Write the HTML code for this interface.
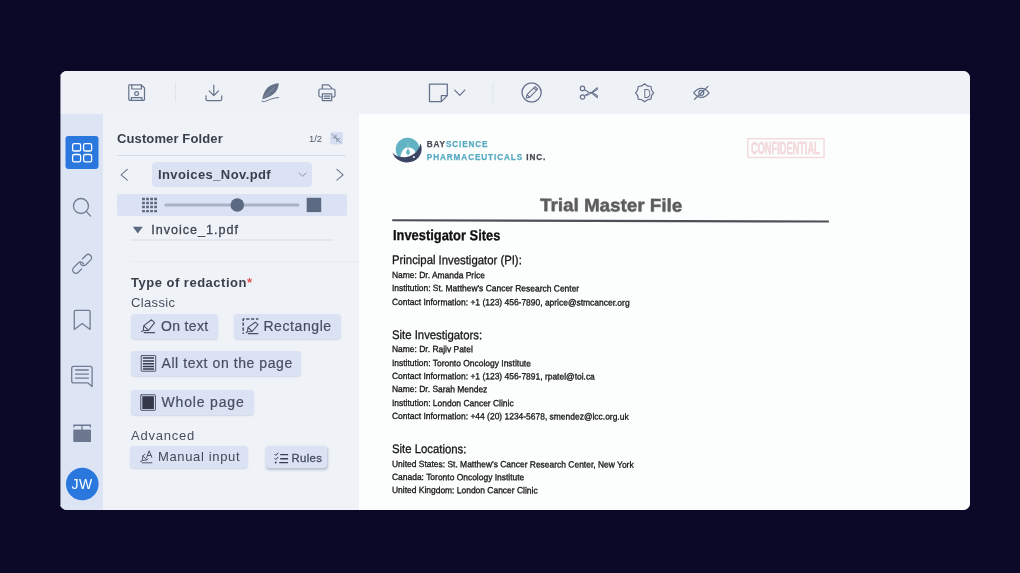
<!DOCTYPE html>
<html lang="en">
<head>
<meta charset="utf-8">
<title>Document redaction</title>
<style>
html,body{margin:0;padding:0;}
body{width:1020px;height:573px;overflow:hidden;background:#0b0927;position:relative;font-family:"Liberation Sans",sans-serif;}
.win{position:absolute;left:60px;top:71px;width:910px;height:439px;border-radius:7px;overflow:hidden;background:#eef2f7;}
.pg{position:absolute;left:-60px;top:-71px;width:1020px;height:573px;filter:blur(.55px);}
.pg div,.pg span,.pg svg{position:absolute;}
.toolbar{left:40px;top:50px;width:950px;height:64px;background:#eef2f7;}
.side{left:40px;top:114px;width:63.4px;height:420px;background:#dde5f5;}
.panel{left:103.4px;top:114px;width:255.8px;height:420px;background:#eff3f8;}
.docbg{left:359.2px;top:114px;width:631px;height:420px;background:#fcfdfd;}
.t{white-space:pre;line-height:1;}
.d{transform-origin:0 50%;-webkit-text-stroke:.3px currentColor;}
.chip{background:#dbe2f4;border-radius:4px;box-shadow:0 1px 1.5px rgba(120,135,170,.25);}
#lg1 i,#lg2 i{font-style:normal;color:#58abc2;}
.hr{height:1px;background:#d9dfea;}
</style>
</head>
<body>
<div class="win"><div class="pg">
<div class="toolbar"></div>
<div class="side"></div>
<div class="panel"></div>
<div class="docbg"></div>

<!-- sidebar -->

<!-- panel -->
<div class="hr" style="left:117px;top:155px;width:229px;background:#d5dcec;"></div>
<div id="sel" style="left:152px;top:162px;width:160px;height:25px;border-radius:4px;background:#dbe2f4;"></div>
<div id="sl" style="left:117px;top:194px;width:230px;height:22px;border-radius:2px;background:#dbe2f4;"></div>
<div class="hr" style="left:131px;top:239px;width:202px;height:2px;background:#e3e7ed;"></div>
<div class="hr" style="left:131px;top:261px;width:228.2px;background:#e8ecf1;"></div>

<div class="chip" id="c1" style="left:131px;top:314px;width:87px;height:25px;"></div>
<div class="chip" id="c2" style="left:234px;top:314px;width:107px;height:25px;"></div>
<div class="chip" id="c3" style="left:131px;top:351px;width:170px;height:25px;"></div>
<div class="chip" id="c4" style="left:131px;top:390px;width:123px;height:25px;"></div>
<div class="chip" id="c5" style="left:130px;top:446px;width:118px;height:22px;"></div>
<div class="chip" id="c6" style="left:266px;top:446px;width:61px;height:22px;box-shadow:.5px 1.5px 2.5px rgba(90,105,140,.36);"></div>

<svg width="1020" height="573" viewBox="0 0 1020 573" style="left:0;top:0">
<rect id="act" x="65.5" y="136.1" width="33" height="33" rx="3" fill="#2a78de"/>
<circle id="ava" cx="82.3" cy="484" r="16.3" fill="#2a78de"/>
<rect x="164.4" y="203.5" width="135.1" height="3" rx="1.5" fill="#a9b3c8"/>
<circle cx="237.3" cy="205" r="6.8" fill="#5b6983"/>
<rect x="306.7" y="197.8" width="14.5" height="14.3" fill="#5b6983"/>
<rect id="cchip" x="330.1" y="131.9" width="12.8" height="12.5" rx="2" fill="#d5def3"/>
</svg>
<div id="txl" style="left:0;top:0;width:1020px;height:573px;will-change:transform;">
<span class="t" id="tCF" style="left:117.0px;top:132.00px;font-size:13px;font-weight:700;letter-spacing:0.12px;color:#3a3f4c;">Customer Folder</span>
<span class="t" id="t12" style="left:309.0px;top:134.01px;font-size:9.5px;letter-spacing:-0.1px;color:#555b6b;">1/2</span>
<span class="t" id="tINV" style="left:158.0px;top:168.01px;font-size:13px;font-weight:700;letter-spacing:0.4px;color:#3a3f4c;">Invoices_Nov.pdf</span>
<span class="t" id="tIN1" style="left:151.3px;top:224.01px;font-size:12.6px;letter-spacing:0.98px;color:#3f4452;-webkit-text-stroke:0.3px #3f4452;">Invoice_1.pdf</span>
<span class="t" id="tTYPE" style="left:131.0px;top:276.00px;font-size:13px;font-weight:700;letter-spacing:0.5px;color:#3a3f4c;">Type of redaction<i style="color:#e0524f;font-style:normal">*</i></span>
<span class="t" id="tCL" style="left:131.0px;top:296.01px;font-size:13px;letter-spacing:0.37px;color:#4a4f5d;">Classic</span>
<span class="t" id="tON" style="left:161.0px;top:319.00px;font-size:14px;letter-spacing:0.33px;color:#474e62;-webkit-text-stroke:.2px #474e62;">On text</span>
<span class="t" id="tRECT" style="left:263.4px;top:319.00px;font-size:14px;letter-spacing:0.59px;color:#474e62;-webkit-text-stroke:.2px #474e62;">Rectangle</span>
<span class="t" id="tALL" style="left:161.5px;top:356.01px;font-size:14px;letter-spacing:0.57px;color:#474e62;-webkit-text-stroke:.2px #474e62;">All text on the page</span>
<span class="t" id="tWH" style="left:161.5px;top:395.00px;font-size:14px;letter-spacing:0.84px;color:#474e62;-webkit-text-stroke:.2px #474e62;">Whole page</span>
<span class="t" id="tADV" style="left:131.0px;top:429.01px;font-size:13px;letter-spacing:0.77px;color:#4a4f5d;">Advanced</span>
<span class="t" id="tMAN" style="left:158.0px;top:450.00px;font-size:13px;letter-spacing:0.65px;color:#434856;">Manual input</span>
<span class="t" id="tRU" style="left:291.6px;top:453.01px;font-size:11.4px;letter-spacing:0.3px;color:#454c60;-webkit-text-stroke:0.3px #454c60;">Rules</span>
<span class="t" id="tJW" style="left:71.4px;top:477.00px;font-size:14px;letter-spacing:0.5px;color:#ffffff;">JW</span>

<span class="t d" id="dT" style="left:540.3px;top:195.81px;font-size:18px;transform:rotate(.165deg) scaleX(1.045);font-weight:700;color:#5c5c5c;text-shadow:0.5px 0.8px 1px rgba(0,0,0,.25);">Trial Master File</span>
<span class="t d" id="dIS" style="left:392.6px;top:228.31px;font-size:14.5px;transform:rotate(.165deg) scaleX(0.888);font-weight:700;color:#111;">Investigator Sites</span>
<span class="t d" id="dH1" style="left:392.2px;top:254.21px;font-size:12.4px;transform:rotate(.165deg) scaleX(0.915);color:#161616;">Principal Investigator (PI):</span>
<span class="t d" id="dL1" style="left:392.2px;top:270.91px;font-size:9px;transform:rotate(.165deg) scaleX(0.939);color:#161616;">Name: Dr. Amanda Price</span>
<span class="t d" id="dL2" style="left:392.2px;top:284.20px;font-size:9px;transform:rotate(.165deg) scaleX(0.939);color:#161616;">Institution: St. Matthew&#39;s Cancer Research Center</span>
<span class="t d" id="dL3" style="left:392.2px;top:297.50px;font-size:9px;transform:rotate(.165deg) scaleX(0.939);color:#161616;">Contact Information: +1 (123) 456-7890, aprice@stmcancer.org</span>
<span class="t d" id="dH2" style="left:392.2px;top:328.80px;font-size:12.4px;transform:rotate(.165deg) scaleX(0.915);color:#161616;">Site Investigators:</span>
<span class="t d" id="dL4" style="left:392.2px;top:345.41px;font-size:9px;transform:rotate(.165deg) scaleX(0.939);color:#161616;">Name: Dr. Rajiv Patel</span>
<span class="t d" id="dL5" style="left:392.2px;top:358.70px;font-size:9px;transform:rotate(.165deg) scaleX(0.939);color:#161616;">Institution: Toronto Oncology Institute</span>
<span class="t d" id="dL6" style="left:392.2px;top:372.00px;font-size:9px;transform:rotate(.165deg) scaleX(0.939);color:#161616;">Contact Information: +1 (123) 456-7891, rpatel@toi.ca</span>
<span class="t d" id="dL7" style="left:392.2px;top:385.31px;font-size:9px;transform:rotate(.165deg) scaleX(0.939);color:#161616;">Name: Dr. Sarah Mendez</span>
<span class="t d" id="dL8" style="left:392.2px;top:398.61px;font-size:9px;transform:rotate(.165deg) scaleX(0.939);color:#161616;">Institution: London Cancer Clinic</span>
<span class="t d" id="dL9" style="left:392.2px;top:411.86px;font-size:9px;transform:rotate(.165deg) scaleX(0.939);color:#161616;">Contact Information: +44 (20) 1234-5678, smendez@lcc.org.uk</span>
<span class="t d" id="dH3" style="left:392.2px;top:443.11px;font-size:12.4px;transform:rotate(.165deg) scaleX(0.915);color:#161616;">Site Locations:</span>
<span class="t d" id="dL10" style="left:392.2px;top:459.70px;font-size:9px;transform:rotate(.165deg) scaleX(0.939);color:#161616;">United States: St. Matthew&#39;s Cancer Research Center, New York</span>
<span class="t d" id="dL11" style="left:392.2px;top:473.00px;font-size:9px;transform:rotate(.165deg) scaleX(0.939);color:#161616;">Canada: Toronto Oncology Institute</span>
<span class="t d" id="dL12" style="left:392.2px;top:486.31px;font-size:9px;transform:rotate(.165deg) scaleX(0.939);color:#161616;">United Kingdom: London Cancer Clinic</span>
<span class="t" id="lg1" style="left:426.8px;top:141.00px;font-size:8.2px;font-weight:700;letter-spacing:0.87px;color:#4b4b55;-webkit-text-stroke:.25px currentColor;">BAY<i>SCIENCE</i></span>
<span class="t" id="lg2" style="left:426.8px;top:154.00px;font-size:8.2px;font-weight:700;letter-spacing:0.9px;color:#4b4b55;-webkit-text-stroke:.25px currentColor;"><i>PHARMACEUTICALS</i> INC.</span>
<span class="t d" id="stx" style="left:751.2px;top:140.01px;font-size:16.3px;transform:scaleX(0.567);font-weight:700;color:#f2d8d9;-webkit-text-stroke:.5px #f2d8d9;">CONFIDENTIAL</span>

</div>

<!-- document -->

<svg id="icons" width="1020" height="573" viewBox="0 0 1020 573" style="left:0;top:0;will-change:transform" fill="none" stroke="#66718a" stroke-width="1.2" stroke-linecap="round" stroke-linejoin="round">
<path d="M392.2 219.2L828.9 220.45V222.6L392.2 221.35Z" fill="#4d5157" stroke="none"/>
<rect id="stamp" x="747.7" y="138.7" width="76.3" height="18.8" stroke="#f3dadb" stroke-width="1.4" stroke-linejoin="miter"/>
<!-- toolbar dividers -->
<path d="M175.6 82.7V101.5M492.9 83V103.3" stroke="#dde3ec" stroke-width="1"/>
<!-- save -->
<g id="iSave"><path d="M129.6 84.8h11.7l3.2 3.2v11.6a.8.8 0 0 1-.8.8h-14.1a.8.8 0 0 1-.8-.8V85.6a.8.8 0 0 1 .8-.8z"/><path d="M131.8 85v4h9.6v-4M131.3 100.2v-2.5h10.7v2.5"/><circle cx="136.6" cy="93.6" r="1.9"/></g>
<!-- download -->
<g id="iDown"><path d="M213.8 85v10.4M209.1 90.9l4.7 4.7 4.7-4.7M206 95.8v3.2a1.6 1.6 0 0 0 1.6 1.6h12.5a1.6 1.6 0 0 0 1.6-1.6v-3.2"/></g>
<!-- feather -->
<g id="iFeather"><path d="M262.4 99.4C262.5 96 264 92 266 89.4C268.6 86 273 83.7 277.8 83.3C278.6 83.3 278.9 83.8 278.7 84.6C278.4 87.200 277 90.5 275.2 92.6C273 95 269 97.3 265.3 98.4Z" fill="#66718a" stroke="none"/><path d="M263.6 98L274.6 87.4" stroke="#aeb6c6" stroke-width=".5"/><path d="M261.9 101.2c1.4 1.100 3 .4 5-.5c3.200-1.400 6.800-2.800 11.600-3.200" stroke-width="1"/></g>
<!-- printer -->
<g id="iPrint"><path d="M322.300 89v-4.200h6.300l3 3V89M322.300 97h-1.900a1.500 1.500 0 0 1-1.500-1.500v-5a1.500 1.500 0 0 1 1.500-1.500h13.100a1.500 1.500 0 0 1 1.500 1.500v5a1.500 1.500 0 0 1-1.500 1.500h-1.800"/><path d="M322.300 93.800h9.400v6.800h-9.400zM324.200 96.200h5.600M324.200 98.400h5.600"/></g>
<!-- note + chevron -->
<g id="iNote"><path d="M429.500 84.100h17.800v11.500l-6 6h-11.800zM441.300 101.400v-5.800h5.800" stroke-width="1.300"/><path d="M454.800 90.200l5 5.200 5-5.200"/></g>
<!-- pencil in circle -->
<g id="iPen"><circle cx="531.6" cy="92.5" r="9.6" stroke-width="1.3"/><path d="M526.3 98l.7-3.300 8.100-8.100 2.600 2.600-8.100 8.100zM533.800 87.900l2.600 2.600M527 94.700l2.600 2.600" stroke-width="1.1"/></g>
<!-- scissors -->
<g id="iSci"><circle cx="582.5" cy="88.400" r="2.200"/><circle cx="582.5" cy="97" r="2.200"/><path d="M584.400 89.800L590.500 93.300L597.300 87.700V89.600L586.500 95.600M584.400 95.600L588 93.600M590.500 92.300L597.300 97.700V95.800L592.300 92.400" stroke-width="1.05"/></g>
<!-- D badge -->
<g id="iD"><path d="M644.60 83.85L647.47 85.92L650.96 86.49L651.53 89.98L653.60 92.85L651.53 95.72L650.96 99.21L647.47 99.78L644.60 101.85L641.73 99.78L638.24 99.21L637.67 95.72L635.60 92.85L637.67 89.98L638.24 86.49L641.73 85.92Z" stroke-width="1.2"/><text transform="translate(643.4 97.6) scale(.78 1)" font-family="'Liberation Sans',sans-serif" font-size="13" fill="#66718a" stroke="none">D</text></g>
<!-- eye slash -->
<g id="iEye"><path d="M693.700 92.800c4.600-6 11-6 15.300 0c-4.300 6-10.700 6-15.300 0z"/><circle cx="701.300" cy="92.800" r="2.500"/><path d="M694.6 99.3L708 86.4"/></g>

<!-- sidebar: grid -->
<g id="iGrid" stroke="#fff" stroke-width="1.300"><rect x="72.600" y="143.700" width="8" height="7.300" rx="1.600"/><rect x="83.600" y="143.700" width="8" height="7.300" rx="1.600"/><rect x="72.600" y="154.500" width="8" height="7.300" rx="1.600"/><rect x="83.600" y="154.500" width="8" height="7.300" rx="1.600"/></g>
<!-- search -->
<g id="iSearch" stroke="#727c92" stroke-width="1.3"><circle cx="80.95" cy="206" r="7.5"/><path d="M86.3 211.4L90.600 216.100"/></g>
<!-- link -->
<g id="iLink" stroke="#727c92" stroke-width="1.3"><path transform="translate(85.900 260.100) rotate(-45)" d="M-1.500 -3.300H3.300A3.300 3.300 0 0 1 3.300 3.300H-3.300A3.300 3.300 0 0 1 -6.300 -1.200"/><path transform="translate(78.300 267.600) rotate(135)" d="M-1.500 -3.300H3.300A3.300 3.300 0 0 1 3.300 3.300H-3.300A3.300 3.300 0 0 1 -6.300 -1.200"/></g>
<!-- bookmark -->
<g id="iBook" stroke="#727c92" stroke-width="1.3"><path d="M74.3 329.4V311.6a1.2 1.2 0 0 1 1.2-1.2h13.4a1.2 1.2 0 0 1 1.2 1.2V329.4l-7.9-6z"/></g>
<!-- comment -->
<g id="iCom" stroke="#727c92" stroke-width="1.3"><path d="M73.7 366.4h16.400a2 2 0 0 1 2 2v18.200l-4.100-3.700h-14.300a2 2 0 0 1-2-2v-12.500a2 2 0 0 1 2-2zM75.5 370h12.900M75.5 374.1h12.900M75.5 378.2h12.900"/></g>
<!-- redact -->
<g id="iRed" fill="#6b7890" stroke="none"><path d="M73.3 424.600h17.700v3h-1.200v-1.700h-15.300v1.700h-1.200z"/><rect x="81.400" y="425" width="1.300" height="5"/><rect x="73.300" y="429.600" width="17.700" height="12.400"/></g>

<!-- collapse icon -->
<g id="iCol" stroke="#7c869c" stroke-width=".9"><path d="M332 134.2L340.9 142.7M335.9 135V137.9H333M336.9 141.8V138.9H339.800"/></g>
<!-- arrows -->
<g id="iArr" stroke="#6b7488" stroke-width="1.100"><path d="M127.300 169.400l-6.200 5.400 6.200 5.400M336.900 169.400l6.200 5.400-6.200 5.400"/><path d="M299.200 173l3.400 3.400 3.400-3.400" stroke="#8a93a8" stroke-width="1"/></g>
<!-- slider grid dots -->
<g id="iDots" fill="#5d6981" stroke="none">
<path d="M142.10 197.70h2.8v2.45h-2.8zM146.13 197.70h2.8v2.45h-2.8zM150.16 197.70h2.8v2.45h-2.8zM154.19 197.70h2.8v2.45h-2.8zM142.10 201.77h2.8v2.45h-2.8zM146.13 201.77h2.8v2.45h-2.8zM150.16 201.77h2.8v2.45h-2.8zM154.19 201.77h2.8v2.45h-2.8zM142.10 205.84h2.8v2.45h-2.8zM146.13 205.84h2.8v2.45h-2.8zM150.16 205.84h2.8v2.45h-2.8zM154.19 205.84h2.8v2.45h-2.8zM142.10 209.91h2.8v2.45h-2.8zM146.13 209.91h2.8v2.45h-2.8zM150.16 209.91h2.8v2.45h-2.8zM154.19 209.91h2.8v2.45h-2.8z"/>
<path d="M132.800 226.700h10l-5 6.900z"/></g>
<!-- marker (On text) -->
<g id="iMk1" stroke="#4a5166" stroke-width="1.1"><path d="M143.800 325.600L151.500 319.800L154.600 322.600L148.500 330.300ZM143.800 325.600L143.200 330.600L148.500 330.300M143.200 330.600L141.600 331.600M144.200 332.600H154.600"/></g>
<!-- dashed rect + marker -->
<g id="iMk2" stroke="#4a5166" stroke-width="1.1"><path d="M243.200 334V319H258.400" stroke-dasharray="3.200 1.700" stroke-dashoffset="1.600" stroke-linecap="butt" stroke-width="1.500"/><path d="M248 327.400L255.300 322.200L258 324.700L252.100 331.500ZM248 327.400L247.400 331.800L252.100 331.500M247.400 331.800L246.200 332.700M248.400 333.600H258"/></g>
<!-- all text -->
<g id="iAll"><rect x="141.200" y="355.600" width="14.500" height="15.600" stroke="#4a5166" stroke-width="1" rx=".5"/><path d="M142.900 358.100h11.100M142.900 360.900h11.100M142.900 363.700h11.100M142.900 366.500h11.100M142.900 369.100h11.100" stroke="#33384a" stroke-width="1.500" stroke-linecap="butt"/></g>
<!-- whole page -->
<g id="iWh"><rect x="140.800" y="394.800" width="14.600" height="15.500" stroke="#4a5166" stroke-width="1" rx=".5"/><rect x="142.300" y="396.200" width="11.600" height="12.800" fill="#343848" stroke="none"/></g>
<!-- manual input -->
<g id="iMan" stroke="#4a5166" stroke-width=".95"><path d="M144.900 454.200L142.800 456L146.900 459.900L148 458.700M142.800 456L142.300 460.600L146.900 459.900M142.300 460.600L140.400 461.600M142.200 462.800H151.900"/><path d="M146.600 457.500L149.200 450.800L151.800 457.500M147.500 455.400H150.900" stroke-width="1"/></g>
<!-- rules -->
<g id="iRul" stroke="#3a4054" stroke-width="1.4" stroke-linecap="butt"><path d="M280.2 454.6h7.9M280.2 458.7h7.9M279.2 462.6h8.9"/><path d="M274.8 454.300l1.100 1.100 2.100-2.300M274.800 458.400l1.100 1.100 2.100-2.300" stroke-width="1" stroke-linecap="round"/><circle cx="275.7" cy="462.6" r="1" fill="#3a4054" stroke="none"/></g>
<!-- logo -->
<g id="logo" stroke="none"><circle cx="407.6" cy="149.5" r="11.85" fill="#62b3c3"/><path d="M400.3 158.5C400.6 152.5 403.5 147.2 407.8 147.2C412 147.2 415 150 415.8 153.2L408 160Z" fill="#fcfdfd"/><path d="M408 143V150.600" stroke="#8cc8d4" stroke-width="1" stroke-linecap="butt"/><ellipse cx="408" cy="152.3" rx="1.8" ry="2.7" fill="#62b3c3"/><path d="M392.6 152.3C394 155.5 399 157.5 405 157.2C412 156.8 418.5 152 420.500 143.600C422.5 148 422 153.5 418.5 157.5C415 161.5 409.5 163 404.5 162.2C398.5 161.2 393.5 157.5 392.6 152.3Z" fill="#3b4664"/><circle cx="413.9" cy="156.9" r="1" fill="#fcfdfd"/></g>


</svg>
</div></div>
<div style="position:absolute;left:60px;top:76px;width:1px;height:429px;background:rgba(11,9,39,.45);"></div>
</body>
</html>
